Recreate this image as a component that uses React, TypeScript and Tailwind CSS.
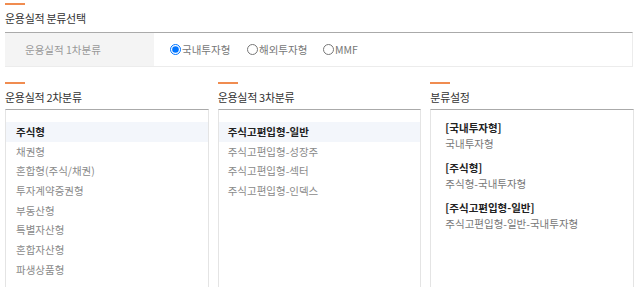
import React from "react";

const font = { fontFamily: '"Noto Sans CJK KR", "Noto Sans", sans-serif' };

function SectionTitle({ children }: { children: React.ReactNode }) {
  return (
    <div>
      <div className="w-[20px] h-[2px] bg-[#f08c50]" />
      <div className="mt-[6px] text-[11px] leading-[14px] text-[#333] tracking-[-0.3px]">{children}</div>
    </div>
  );
}

const list2 = ["주식형", "채권형", "혼합형(주식/채권)", "투자계약증권형", "부동산형", "특별자산형", "혼합자산형", "파생상품형"];
const list3 = ["주식고편입형-일반", "주식고편입형-성장주", "주식고편입형-섹터", "주식고편입형-인덱스"];
const settings = [
  ["[국내투자형]", "국내투자형"],
  ["[주식형]", "주식형-국내투자형"],
  ["[주식고편입형-일반]", "주식고편입형-일반-국내투자형"],
];

function ListBox({ items, pl }: { items: string[]; pl: string }) {
  return (
    <div className="flex-1 h-[200px] border-t border-t-[#aaa] border-x border-x-[#e4e4e4] pt-[12px]">
      {items.map((t, i) => (
        <div
          key={t}
          className={`h-[19.7px] flex items-center text-[10.5px] ${pl} ${i === 0 ? "bg-[#f3f6fb] text-[#222] font-bold" : "text-[#8a8a8a]"}`}
        >
          {t}
        </div>
      ))}
    </div>
  );
}

export default function App() {
  return (
    <div className="w-[640px] h-[287px] overflow-hidden bg-white px-[5px] pt-[3px]" style={font}>
      <SectionTitle>운용실적 분류선택</SectionTitle>
      <div className="mt-[7px] w-[628px] h-[35px] border-t border-t-[#aaa] border-b border-b-[#ececec] border-r border-r-[#ececec] flex">
        <div className="w-[149px] bg-[#f4f4f4] flex items-center pl-[20px] text-[10.5px] text-[#999]">운용실적 1차분류</div>
        <div className="flex items-center pl-[16px] text-[10.5px] text-[#777]">
          <label className="flex items-center w-[77px]">
            <input type="radio" name="r" defaultChecked className="m-0 w-[11px] h-[11px] mr-[1px]" />
            국내투자형
          </label>
          <label className="flex items-center w-[76px]">
            <input type="radio" name="r" className="m-0 w-[11px] h-[11px] mr-[1px]" />
            해외투자형
          </label>
          <label className="flex items-center">
            <input type="radio" name="r" className="m-0 w-[11px] h-[11px] mr-[1px]" />
            MMF
          </label>
        </div>
      </div>
      <div className="mt-[15px] flex gap-[9px] w-[629px]">
        <div className="flex-1 flex flex-col">
          <SectionTitle>운용실적 2차분류</SectionTitle>
          <div className="mt-[5px] flex">
            <ListBox items={list2} pl="pl-[10px]" />
          </div>
        </div>
        <div className="flex-1 flex flex-col">
          <SectionTitle>운용실적 3차분류</SectionTitle>
          <div className="mt-[5px] flex">
            <ListBox items={list3} pl="pl-[9px]" />
          </div>
        </div>
        <div className="flex-1 flex flex-col">
          <SectionTitle>분류설정</SectionTitle>
          <div className="mt-[5px] flex">
            <div className="flex-1 h-[200px] border-t border-t-[#aaa] border-x border-x-[#e4e4e4] pt-[10px] pl-[14px]">
              {settings.map(([h, s]) => (
                <div key={h} className="h-[40px]">
                  <div className="h-[16px] flex items-center text-[10.5px] font-bold text-[#222]">{h}</div>
                  <div className="h-[16px] flex items-center text-[10.5px] text-[#777]">{s}</div>
                </div>
              ))}
            </div>
          </div>
        </div>
      </div>
    </div>
  );
}
